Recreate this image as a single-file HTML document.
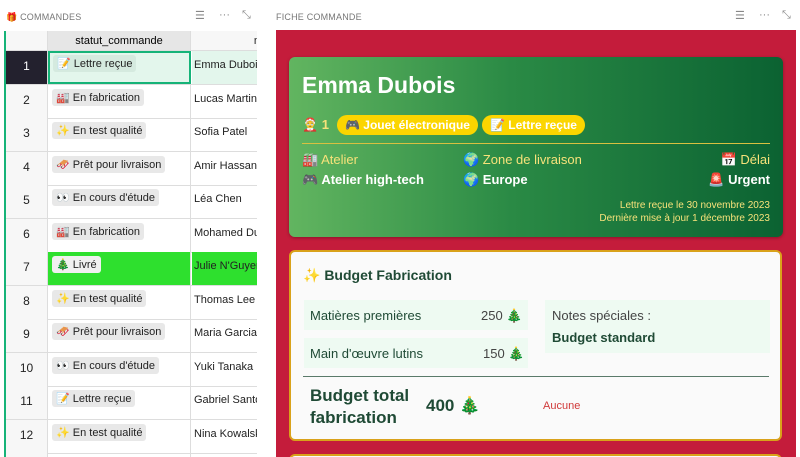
<!DOCTYPE html>
<html style="width:800px;height:457px;overflow:hidden"><head><meta charset="utf-8"><style>
*{box-sizing:border-box;margin:0;padding:0}
body{width:800px;height:457px;overflow:hidden;background:#fff;font-family:"Liberation Sans","Noto Sans CJK JP",sans-serif;position:relative}
.hdr{position:absolute;top:12px;font-size:9px;color:#777;letter-spacing:.2px}
.ic{position:absolute;top:9px;font-size:11px;color:#888}
.grid{position:absolute;left:4px;top:31px;width:253px;height:426px;border-left:2px solid #16b378;overflow:hidden}
.row{position:absolute;left:0;height:34px;width:251px;border-bottom:1px solid #ddd}
.num{position:absolute;left:0;width:42px;height:100%;background:#f7f7f7;border-right:1px solid #ddd;text-align:center;font-size:12px;color:#222;padding-top:8px}
.st{position:absolute;left:42px;width:143px;height:100%;border-right:1px solid #ddd;padding:3px 4px}
.tag{display:inline-block;background:#e8e8e8;border-radius:3px;padding:2px 4px;font-size:11px;color:#222}
.nm{position:absolute;left:186px;width:70px;height:100%;font-size:11px;color:#222;padding:8px 2px;white-space:nowrap;overflow:hidden}
.red{position:absolute;left:276px;top:30px;width:520px;height:427px;background:#c41c3b;overflow:hidden}
.card1{position:absolute;left:289px;top:57px;width:494px;height:180px;border-radius:6px;background:linear-gradient(90deg,#62b560,#2a8a45 45%,#0b6232);box-shadow:0 1px 3px rgba(0,0,0,.3)}
.card2{position:absolute;left:289px;top:250px;width:493px;height:191px;border-radius:6px;background:#fafafa;border:2px solid #d9a21a}
.pill{position:absolute;top:115px;height:20px;background:#fbd500;border-radius:10px;color:#fff;font-size:12px;font-weight:bold;padding:3px 8px}
.y{color:#f7e27a}
</style></head><body>
<div class="hdr" style="left:6px">🎁 COMMANDES</div>
<div class="ic" style="left:195px">☰</div><div class="ic" style="left:219px">···</div><div class="ic" style="left:242px">⤡</div>
<div class="hdr" style="left:276px">FICHE COMMANDE</div>
<div class="ic" style="left:735px">☰</div><div class="ic" style="left:759px">···</div><div class="ic" style="left:782px">⤡</div>
<div class="grid">
<div class="row" style="top:0;height:20px;background:#f7f7f7"><div class="num" style="padding-top:3px"></div><div class="st" style="background:#e6e6e6;text-align:center;font-size:11px;padding-top:4px">statut_commande</div><div class="nm" style="padding-top:4px;text-align:right">n</div></div>
<div class="row" style="top:20px"><div class="num" style="background:#23212e;color:#fff">1</div><div class="st" style="background:#e3f6ec;border:2px solid #16b378;padding:1px 3px"><span class="tag" style="background:#d5eadf">📝 Lettre reçue</span></div><div class="nm" style="background:#e3f6ec">Emma Dubois</div></div>
<div class="row" style="top:54px"><div class="num">2</div><div class="st"><span class="tag">🏭 En fabrication</span></div><div class="nm">Lucas Martin</div></div>
<div class="row" style="top:87px"><div class="num">3</div><div class="st"><span class="tag">✨ En test qualité</span></div><div class="nm">Sofia Patel</div></div>
<div class="row" style="top:121px"><div class="num">4</div><div class="st"><span class="tag">🛷 Prêt pour livraison</span></div><div class="nm">Amir Hassan</div></div>
<div class="row" style="top:154px"><div class="num">5</div><div class="st"><span class="tag">👀 En cours d'étude</span></div><div class="nm">Léa Chen</div></div>
<div class="row" style="top:188px"><div class="num">6</div><div class="st"><span class="tag">🏭 En fabrication</span></div><div class="nm">Mohamed Du</div></div>
<div class="row" style="top:221px"><div class="num">7</div><div class="st" style="background:#2ee02e"><span class="tag" style="background:#f0f0f0">🎄 Livré</span></div><div class="nm" style="background:#2ee02e">Julie N'Guyen</div></div>
<div class="row" style="top:255px"><div class="num">8</div><div class="st"><span class="tag">✨ En test qualité</span></div><div class="nm">Thomas Lee</div></div>
<div class="row" style="top:288px"><div class="num">9</div><div class="st"><span class="tag">🛷 Prêt pour livraison</span></div><div class="nm">Maria Garcia</div></div>
<div class="row" style="top:322px"><div class="num">10</div><div class="st"><span class="tag">👀 En cours d'étude</span></div><div class="nm">Yuki Tanaka</div></div>
<div class="row" style="top:355px"><div class="num">11</div><div class="st"><span class="tag">📝 Lettre reçue</span></div><div class="nm">Gabriel Santos</div></div>
<div class="row" style="top:389px"><div class="num">12</div><div class="st"><span class="tag">✨ En test qualité</span></div><div class="nm">Nina Kowalski</div></div>
<div class="row" style="top:422px"><div class="num"></div><div class="st"></div></div>
</div>
<div class="red"><div style="position:absolute;left:13px;top:424px;width:493px;height:20px;border-radius:6px;background:#fafafa;border:2px solid #d9a21a"></div></div>
<div class="card1"></div>
<div style="position:absolute;left:302px;top:72px;font-size:23px;font-weight:bold;color:#fff">Emma Dubois</div>
<div style="position:absolute;left:302px;top:117px;font-size:13px;font-weight:bold;color:#f7e27a">🤶 1</div>
<div class="pill" style="left:337px">🎮 Jouet électronique</div>
<div class="pill" style="left:482px">📝 Lettre reçue</div>
<div style="position:absolute;left:302px;top:143px;width:468px;height:1px;background:#d8c040"></div>
<div style="position:absolute;left:302px;top:152px;font-size:13px" class="y">🏭 Atelier</div>
<div style="position:absolute;left:302px;top:172px;font-size:13px;color:#fff;font-weight:bold">🎮 Atelier high-tech</div>
<div style="position:absolute;left:463px;top:152px;font-size:13px" class="y">🌍 Zone de livraison</div>
<div style="position:absolute;left:463px;top:172px;font-size:13px;color:#fff;font-weight:bold">🌍 Europe</div>
<div style="position:absolute;right:30px;top:152px;font-size:13px" class="y">📅 Délai</div>
<div style="position:absolute;right:30px;top:172px;font-size:13px;color:#fff;font-weight:bold">🚨 Urgent</div>
<div style="position:absolute;right:30px;top:199px;font-size:10px;line-height:13px;text-align:right" class="y">Lettre reçue le 30 novembre 2023<br>Dernière mise à jour 1 décembre 2023</div>
<div class="card2"></div>
<div style="position:absolute;left:303px;top:267px;font-size:14px;font-weight:bold;color:#1f4a35">✨ Budget Fabrication</div>
<div style="position:absolute;left:304px;top:300px;width:224px;height:30px;background:#eefaf2"></div>
<div style="position:absolute;left:304px;top:338px;width:224px;height:30px;background:#eefaf2"></div>
<div style="position:absolute;left:545px;top:300px;width:225px;height:53px;background:#eefaf2"></div>
<div style="position:absolute;left:310px;top:308px;font-size:13px;color:#1f4a35">Matières premières</div>
<div style="position:absolute;left:481px;top:308px;font-size:13px;color:#444">250 🎄</div>
<div style="position:absolute;left:310px;top:346px;font-size:13px;color:#1f4a35">Main d'œuvre lutins</div>
<div style="position:absolute;left:483px;top:346px;font-size:13px;color:#444">150 🎄</div>
<div style="position:absolute;left:552px;top:308px;font-size:13px;color:#444">Notes spéciales :</div>
<div style="position:absolute;left:552px;top:330px;font-size:13px;font-weight:bold;color:#1f4a35">Budget standard</div>
<div style="position:absolute;left:303px;top:376px;width:466px;height:1px;background:#5a7a6a"></div>
<div style="position:absolute;left:310px;top:385px;font-size:17px;font-weight:bold;color:#1f4a35;line-height:22px">Budget total<br>fabrication</div>
<div style="position:absolute;left:426px;top:396px;font-size:17px;font-weight:bold;color:#1f4a35">400 🎄</div>
<div style="position:absolute;left:543px;top:400px;font-size:11px;color:#d03a3a">Aucune</div>
</body></html>
